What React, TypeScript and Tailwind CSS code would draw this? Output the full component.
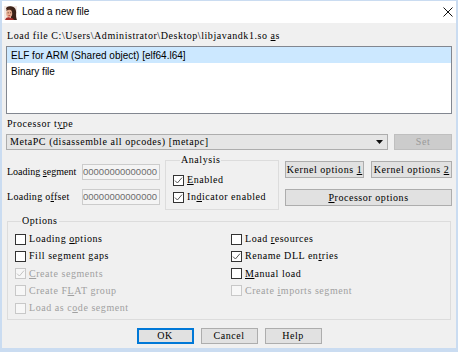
import React from "react";

const serif = "font-['Liberation_Serif',serif] text-[10px] tracking-[0.55px] leading-[12px]";
const sans = "font-['Liberation_Sans',Arial,sans-serif]";

function Check({
  checked,
  disabled,
  children,
}: {
  checked?: boolean;
  disabled?: boolean;
  children: React.ReactNode;
}) {
  return (
    <div className="flex items-center h-[14px]">
      <span
        className={`w-[11px] h-[11px] shrink-0 border flex items-center justify-center ${
          disabled ? "border-[#c8c8c8] bg-[#f7f7f7]" : "border-[#333333] bg-white"
        }`}
      >
        {checked && (
          <svg width="9" height="9" viewBox="0 0 9 9">
            <path
              d="M1 4.6 L3.4 7 L8 1.6"
              fill="none"
              stroke={disabled ? "#c4c4c4" : "#555555"}
              strokeWidth="1"
            />
          </svg>
        )}
      </span>
      <span className={`ml-[3px] whitespace-nowrap ${serif} ${disabled ? "text-[#a0a0a0]" : "text-black"}`}>
        {children}
      </span>
    </div>
  );
}

function Btn({
  children,
  className = "",
  primary,
  disabled,
}: {
  children: React.ReactNode;
  className?: string;
  primary?: boolean;
  disabled?: boolean;
}) {
  const look = disabled
    ? "bg-[#cccccc] border-[#bfbfbf] text-[#9a9a9a]"
    : primary
    ? "bg-[#e1e1e1] border-[#0078d7] shadow-[inset_0_0_0_1px_#0078d7] text-black"
    : "bg-[#e1e1e1] border-[#adadad] text-black";
  return (
    <div className={`flex items-center justify-center border whitespace-nowrap ${look} ${serif} ${className}`}>
      <span>{children}</span>
    </div>
  );
}

function IdaIcon() {
  return (
    <svg width="13" height="14" viewBox="0 0 13 14">
      <rect x="0" y="0" width="13" height="14" fill="#f3e7e2" />
      <path d="M2 3 C2 0.5 5 -0.3 8 0.4 C11.5 1.2 12.5 4 12 8 C11.8 11 12.5 13 13 14 L7 14 L7 4 Z" fill="#3b2218" />
      <path d="M2.5 3 C4 1.5 7 1.8 8 4 L8 6 C6 5 4 4.6 2.5 5 Z" fill="#4a2a1c" />
      <ellipse cx="5.2" cy="7.6" rx="3" ry="3.8" fill="#e6ae92" />
      <path d="M3.6 6.8 h1.2 M6 6.8 h1.2" stroke="#5a3020" strokeWidth="0.8" />
      <path d="M4.4 9.6 h1.8" stroke="#c2413a" strokeWidth="0.9" />
      <path d="M1 14 C2 11.5 4 11 5.5 11.6 C7.5 12.2 9 12 10 14 Z" fill="#a8302c" />
    </svg>
  );
}

export default function App() {
  return (
    <div className="w-[458px] h-[352px] bg-[#cadcf1] pt-px pb-[4px] px-[2px] flex flex-col">
      {/* title bar */}
      <div className="h-[22px] bg-white flex items-center shrink-0">
        <div className="ml-[2px] mt-[1px]">
          <IdaIcon />
        </div>
        <span className={`ml-[5px] text-[10px] leading-[12px] text-black ${sans}`}>Load a new file</span>
        <svg className="ml-auto mr-[3px]" width="10" height="10" viewBox="0 0 10 10">
          <path d="M0.5 0.5 L9.5 9.5 M9.5 0.5 L0.5 9.5" stroke="#111" strokeWidth="1" />
        </svg>
      </div>

      {/* client area */}
      <div className="flex-1 bg-[#f0f0f0] px-[4px] flex flex-col">
        <div className={`mt-[7px] h-[12px] pl-px whitespace-nowrap text-black ${serif}`}>
          Load file C:\Users\Administrator\Desktop\libjavandk1.so <u>a</u>s
        </div>

        <div className="mt-[4px] h-[68px] border border-[#828790] bg-white flex flex-col">
          <div className={`h-[16px] bg-[#cce8ff] pl-[4px] flex items-center text-[10px] text-black ${sans}`}>
            ELF for ARM (Shared object) [elf64.l64]
          </div>
          <div className={`h-[16px] pl-[4px] flex items-center text-[10px] text-black ${sans}`}>Binary file</div>
        </div>

        <div className={`mt-[4px] h-[12px] pl-px text-black ${serif}`}>
          Processor t<u>y</u>pe
        </div>

        <div className="mt-[4px] h-[16px] flex">
          <div className="w-[382px] border border-[#adadad] bg-[#e5e5e5] flex items-center pl-[3px] pr-[4px]">
            <span className={`text-black whitespace-nowrap ${serif}`}>MetaPC (disassemble all opcodes) [metapc]</span>
            <svg className="ml-auto" width="7" height="4" viewBox="0 0 7 4">
              <path d="M0 0 H7 L3.5 4 Z" fill="#111" />
            </svg>
          </div>
          <Btn disabled className="ml-[6px] flex-1">
            Set
          </Btn>
        </div>

        {/* middle section */}
        <div className="mt-[4px] h-[56px] flex">
          <div className="w-[154px] pt-[10px] flex flex-col gap-[9px]">
            <div className="h-[16px] flex items-center">
              <span className="w-[76px] shrink-0 pl-px whitespace-nowrap text-black font-['Liberation_Serif',serif] text-[10px] leading-[12px] tracking-[0px]">
                Loading <u>s</u>egment
              </span>
              <div className="w-[78px] h-[16px] shrink-0 border border-[#cccccc] bg-[#f4f4f4] overflow-hidden flex items-center justify-end pr-[2px]">
                <span className={`text-[9.5px] text-[#6d6d6d] whitespace-nowrap ${sans}`}>0000000000000000</span>
              </div>
            </div>
            <div className="h-[16px] flex items-center">
              <span className="w-[76px] shrink-0 pl-px whitespace-nowrap text-black font-['Liberation_Serif',serif] text-[10px] leading-[12px] tracking-[0.3px]">
                Loading o<u>f</u>fset
              </span>
              <div className="w-[78px] h-[16px] shrink-0 border border-[#cccccc] bg-[#f4f4f4] overflow-hidden flex items-center justify-end pr-[2px]">
                <span className={`text-[9.5px] text-[#6d6d6d] whitespace-nowrap ${sans}`}>0000000000000000</span>
              </div>
            </div>
          </div>

          <fieldset className="ml-[5px] w-[114px] h-[56px] border border-[#dcdcdc] pl-[7px] pt-[7px] flex flex-col gap-[3px]">
            <legend className={`ml-[7px] px-px text-black ${serif}`}>Analysis</legend>
            <Check checked>
              <u>E</u>nabled
            </Check>
            <Check checked>
              In<u>d</u>icator enabled
            </Check>
          </fieldset>

          <div className="ml-[6px] flex-1 pt-[7px] flex flex-col gap-[11px]">
            <div className="flex gap-[7px]">
              <Btn className="w-[79px] h-[17px]">
                Kernel options <u>1</u>
              </Btn>
              <Btn className="flex-1 h-[17px]">
                Kernel options <u>2</u>
              </Btn>
            </div>
            <Btn className="h-[17px]">
              <u>P</u>rocessor options
            </Btn>
          </div>
        </div>

        {/* options group */}
        <fieldset className="mt-[5px] mx-px h-[105px] border border-[#dcdcdc] pl-[7px] pt-[5px] flex">
          <legend className={`ml-[6px] px-px text-black ${serif}`}>Options</legend>
          <div className="w-[216px] flex flex-col gap-[3.25px]">
            <Check>
              Loading <u>o</u>ptions
            </Check>
            <Check>Fill segment gaps</Check>
            <Check checked disabled>
              <u>C</u>reate segments
            </Check>
            <Check disabled>
              Create F<u>L</u>AT group
            </Check>
            <Check disabled>
              Load as c<u>o</u>de segment
            </Check>
          </div>
          <div className="flex flex-col gap-[3.25px]">
            <Check>
              Load <u>r</u>esources
            </Check>
            <Check checked>
              Rename DLL en<u>t</u>ries
            </Check>
            <Check>
              <u>M</u>anual load
            </Check>
            <Check disabled>
              Create <u>i</u>mports segment
            </Check>
          </div>
        </fieldset>

        <div className="mt-[8px] h-[16px] flex justify-center gap-[7px]">
          <Btn primary className="w-[57px]">
            OK
          </Btn>
          <Btn className="w-[57px]">Cancel</Btn>
          <Btn className="w-[57px]">Help</Btn>
        </div>
      </div>
    </div>
  );
}
